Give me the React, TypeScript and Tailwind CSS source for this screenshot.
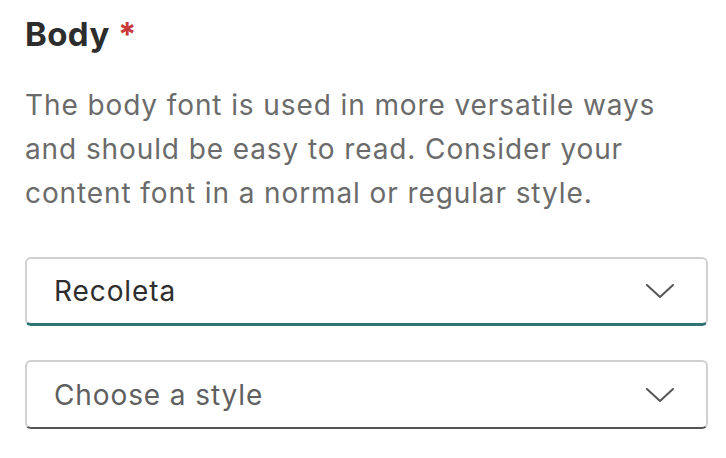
import React from 'react';

const Chevron = () => (
  <svg width="30" height="16" viewBox="0 0 30 16" fill="none" className="shrink-0">
    <path d="M2 2 L15 14 L28 2" stroke="#555" strokeWidth="2" strokeLinecap="round" strokeLinejoin="round" />
  </svg>
);

type SelectProps = {
  value: string;
  placeholder?: boolean;
  focused?: boolean;
};

const SelectBox: React.FC<SelectProps> = ({ value, placeholder, focused }) => (
  <div
    className={`flex items-center justify-between h-[69px] pl-[27px] pr-[31px] bg-white rounded-[6px] border-2 border-[#d0d0d0] ${
      focused ? 'border-b-[3px] border-b-[#2e7475]' : 'border-b-2 border-b-[#555555]'
    }`}
  >
    <span className={`text-[28px] tracking-[0.9px] ${placeholder ? 'text-[#5f5f5f]' : 'text-[#2e2e2e]'}`}>{value}</span>
    <Chevron />
  </div>
);

export default function App() {
  return (
    <div className="w-[726px] h-[458px] bg-white pl-[25px] pr-[18px] pt-[14px] font-['Inter','Noto_Sans',sans-serif]">
      <h2 className="text-[33px] font-bold text-[#2d2d2d] leading-[40px] tracking-[0.4px]">
        Body <span className="text-[#c8383b]">*</span>
      </h2>
      <p className="mt-[29px] text-[28px] leading-[44px] tracking-[0.9px] text-[#6b6b6b]">
        The body font is used in more versatile ways and should be easy to read. Consider your content font in a normal or regular style.
      </p>
      <div className="mt-[42px] flex flex-col gap-[34px]">
        <SelectBox value="Recoleta" focused />
        <SelectBox value="Choose a style" placeholder />
      </div>
    </div>
  );
}
